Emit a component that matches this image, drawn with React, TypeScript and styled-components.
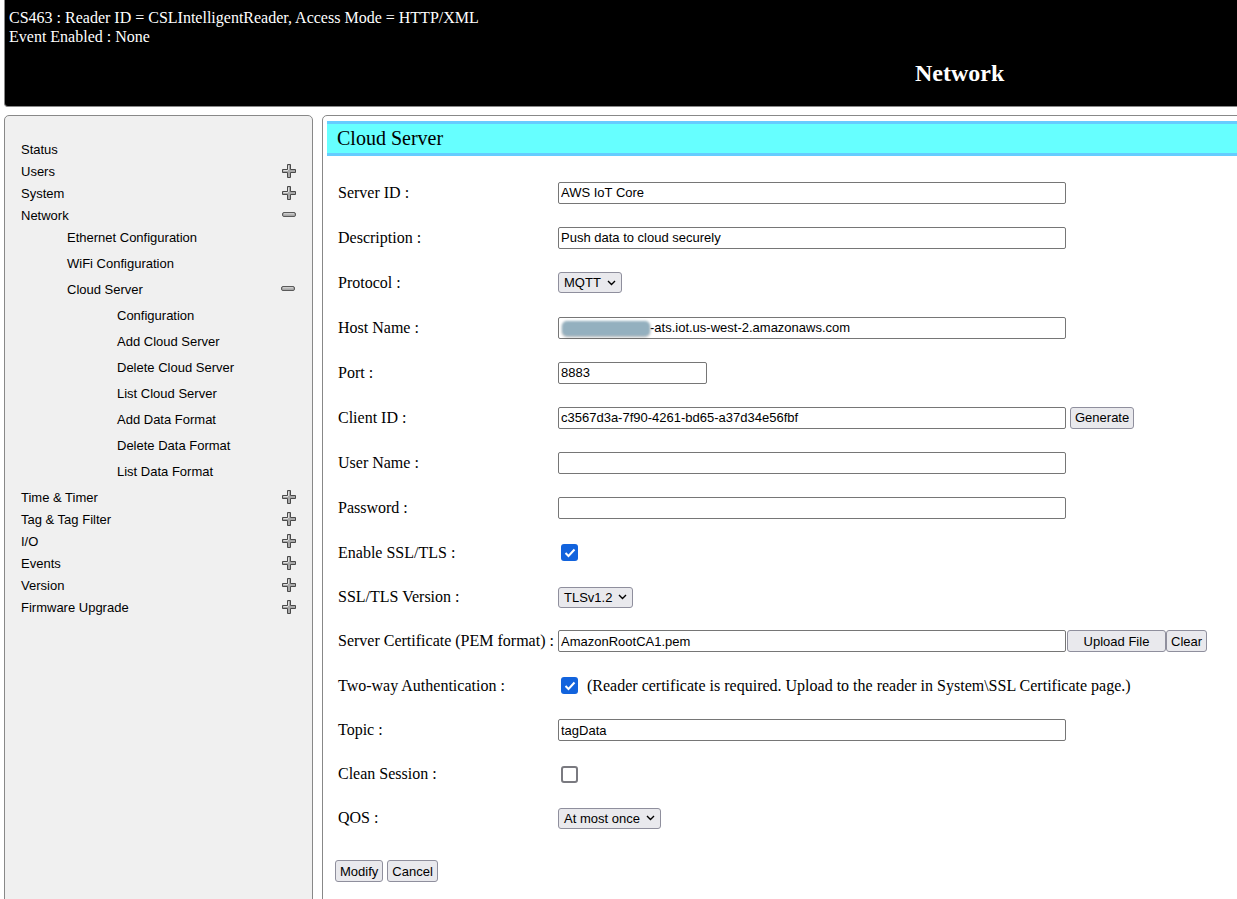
import React from "react";
import styled, { createGlobalStyle } from "styled-components";

const Global = createGlobalStyle`
  html, body { margin: 0; padding: 0; background: #fff; overflow: hidden; }
  body { font-family: "Liberation Serif", "Times New Roman", serif; }
`;

const Page = styled.div`
  width: 1262px;
  padding-left: 4px;
`;

const Header = styled.header`
  height: 107px;
  background: #000;
  border: 1px solid #888;
  border-top: none;
  border-radius: 0 0 4px 4px;
  color: #fff;
  display: flex;
  flex-direction: column;
  padding: 8px 0 0 4px;
  box-sizing: border-box;
  font-size: 16px;
  line-height: 19px;
`;

const InfoLine = styled.div`
  white-space: nowrap;
`;

const PageTitle = styled.div`
  margin-top: 13px;
  padding-left: 906px;
  font-size: 24px;
  font-weight: bold;
  line-height: 28px;
`;

const Body = styled.div`
  display: flex;
  gap: 9px;
  margin-top: 8px;
`;

const Sidebar = styled.nav`
  width: 309px;
  height: 820px;
  box-sizing: border-box;
  background: #f0f0f0;
  border: 1px solid #888;
  border-radius: 5px;
  padding: 22px 16px 0 16px;
  font-family: "Liberation Sans", Arial, sans-serif;
  font-size: 13px;
  color: #000;
`;

const NavRow = styled.div<{ $level: number }>`
  display: flex;
  align-items: center;
  justify-content: space-between;
  height: 22px;
  margin-bottom: ${(p) => (p.$level > 0 ? 4 : 0)}px;
  padding-left: ${(p) => (p.$level === 0 ? 0 : p.$level === 1 ? 46 : 96)}px;
  padding-right: ${(p) => (p.$level === 0 ? 0 : 1)}px;
  white-space: nowrap;
`;

const Main = styled.main`
  flex: 1;
  height: 820px;
  box-sizing: border-box;
  border: 1px solid #888;
  border-radius: 5px;
  padding: 5px 0 0 4px;
`;

const TitleBar = styled.div`
  height: 35px;
  box-sizing: border-box;
  background: #66ffff;
  border-top: 3px solid #66ccff;
  border-bottom: 3px solid #66ccff;
  padding-left: 10px;
  font-size: 20px;
  line-height: 29px;
`;

const Form = styled.div`
  padding: 14px 0 0 11px;
`;

const Row = styled.div<{ $h: number }>`
  display: grid;
  grid-template-columns: 220px auto;
  align-items: center;
  height: ${(p) => p.$h}px;
  font-size: 16px;
`;

const Label = styled.div`
  white-space: nowrap;
`;

const Control = styled.div`
  display: flex;
  align-items: center;
`;

const TextInput = styled.input<{ $w?: number }>`
  box-sizing: border-box;
  width: ${(p) => p.$w ?? 508}px;
  height: 22px;
  border: 1px solid #767676;
  border-radius: 2px;
  padding: 0 2px;
  font-family: "Liberation Sans", Arial, sans-serif;
  font-size: 13px;
  color: #000;
  background: #fff;
  outline: none;
  margin: 0;
`;

const FakeInput = styled.div`
  box-sizing: border-box;
  width: 508px;
  height: 22px;
  border: 1px solid #767676;
  border-radius: 2px;
  padding: 0 3px;
  font-family: "Liberation Sans", Arial, sans-serif;
  font-size: 13px;
  display: flex;
  align-items: center;
  background: #fff;
`;

const Blur = styled.span`
  display: inline-block;
  width: 88px;
  height: 15px;
  margin-top: 2px;
  border-radius: 5px;
  background: #94b0bf;
  filter: blur(0.8px);
  box-shadow: 0 1px 2px rgba(0, 0, 0, 0.35);
`;

const Button = styled.button<{ $w?: number; $ml?: number }>`
  box-sizing: border-box;
  height: 22px;
  ${(p) => (p.$w ? `width: ${p.$w}px;` : "")}
  margin: 0 0 0 ${(p) => p.$ml ?? 0}px;
  padding: 0 4px;
  border: 1px solid #8f8f9d;
  border-radius: 3px;
  background: #e9e9ed;
  font-family: "Liberation Sans", Arial, sans-serif;
  font-size: 13px;
  color: #000;
`;

const Select = styled.div`
  box-sizing: border-box;
  height: 21px;
  display: inline-flex;
  align-items: center;
  gap: 6px;
  padding: 0 5px 0 5px;
  border: 1px solid #8f8f9d;
  border-radius: 3px;
  background: #e9e9ed;
  font-family: "Liberation Sans", Arial, sans-serif;
  font-size: 13px;
`;

const Check = styled.span<{ $on: boolean }>`
  box-sizing: border-box;
  width: 17px;
  height: 17px;
  margin-left: 3px;
  border-radius: 3px;
  display: inline-flex;
  align-items: center;
  justify-content: center;
  background: ${(p) => (p.$on ? "#1263dd" : "#fff")};
  border: ${(p) => (p.$on ? "none" : "2px solid #7a7a80")};
`;

const Note = styled.span`
  margin-left: 9px;
  white-space: nowrap;
`;

const Actions = styled.div`
  display: flex;
  gap: 4px;
  margin: 20px 0 0 -3px;
`;

const Plus = () => (
  <svg width="14" height="14" viewBox="0 0 14 14">
    <path
      d="M5.5 0.5h3v5h5v3h-5v5h-3v-5h-5v-3h5z"
      fill="#a8a8a8"
      stroke="#4a4a4a"
      strokeWidth="1"
    />
    <path d="M6.5 1.5v4.5M1.5 6.5h4.5" stroke="#e0e0e0" strokeWidth="1" />
  </svg>
);

const Minus = () => (
  <svg width="14" height="6" viewBox="0 0 14 6">
    <rect x="0.5" y="0.5" width="13" height="4" rx="1.5" fill="#a8a8a8" stroke="#5a5a5a" />
    <path d="M2 1.8h10" stroke="#dcdcdc" strokeWidth="1" />
  </svg>
);

const Chevron = () => (
  <svg width="9" height="6" viewBox="0 0 9 6">
    <path d="M1 1l3.5 3.5L8 1" fill="none" stroke="#000" strokeWidth="1.4" />
  </svg>
);

const Tick = () => (
  <svg width="12" height="10" viewBox="0 0 12 10">
    <path d="M1.5 5l3 3 6-6.5" fill="none" stroke="#fff" strokeWidth="2" />
  </svg>
);

type Nav = { label: string; level: number; icon?: "plus" | "minus" };

const nav: Nav[] = [
  { label: "Status", level: 0 },
  { label: "Users", level: 0, icon: "plus" },
  { label: "System", level: 0, icon: "plus" },
  { label: "Network", level: 0, icon: "minus" },
  { label: "Ethernet Configuration", level: 1 },
  { label: "WiFi Configuration", level: 1 },
  { label: "Cloud Server", level: 1, icon: "minus" },
  { label: "Configuration", level: 2 },
  { label: "Add Cloud Server", level: 2 },
  { label: "Delete Cloud Server", level: 2 },
  { label: "List Cloud Server", level: 2 },
  { label: "Add Data Format", level: 2 },
  { label: "Delete Data Format", level: 2 },
  { label: "List Data Format", level: 2 },
  { label: "Time & Timer", level: 0, icon: "plus" },
  { label: "Tag & Tag Filter", level: 0, icon: "plus" },
  { label: "I/O", level: 0, icon: "plus" },
  { label: "Events", level: 0, icon: "plus" },
  { label: "Version", level: 0, icon: "plus" },
  { label: "Firmware Upgrade", level: 0, icon: "plus" },
];

export default function App() {
  return (
    <Page>
      <Global />
      <Header>
        <InfoLine>CS463 : Reader ID = CSLIntelligentReader, Access Mode = HTTP/XML</InfoLine>
        <InfoLine>Event Enabled : None</InfoLine>
        <PageTitle>Network</PageTitle>
      </Header>
      <Body>
        <Sidebar>
          {nav.map((n) => (
            <NavRow key={n.label} $level={n.level}>
              <span>{n.label}</span>
              {n.icon === "plus" && <Plus />}
              {n.icon === "minus" && <Minus />}
            </NavRow>
          ))}
        </Sidebar>
        <Main>
          <TitleBar>Cloud Server</TitleBar>
          <Form>
            <Row $h={45}>
              <Label>Server ID :</Label>
              <Control><TextInput readOnly value="AWS IoT Core" /></Control>
            </Row>
            <Row $h={45}>
              <Label>Description :</Label>
              <Control><TextInput readOnly value="Push data to cloud securely" /></Control>
            </Row>
            <Row $h={45}>
              <Label>Protocol :</Label>
              <Control><Select>MQTT <Chevron /></Select></Control>
            </Row>
            <Row $h={45}>
              <Label>Host Name :</Label>
              <Control>
                <FakeInput><Blur />-ats.iot.us-west-2.amazonaws.com</FakeInput>
              </Control>
            </Row>
            <Row $h={45}>
              <Label>Port :</Label>
              <Control><TextInput $w={149} readOnly value="8883" /></Control>
            </Row>
            <Row $h={45}>
              <Label>Client ID :</Label>
              <Control>
                <TextInput readOnly value="c3567d3a-7f90-4261-bd65-a37d34e56fbf" />
                <Button $ml={4}>Generate</Button>
              </Control>
            </Row>
            <Row $h={45}>
              <Label>User Name :</Label>
              <Control><TextInput readOnly value="" /></Control>
            </Row>
            <Row $h={45}>
              <Label>Password :</Label>
              <Control><TextInput type="password" readOnly value="" /></Control>
            </Row>
            <Row $h={45}>
              <Label>Enable SSL/TLS :</Label>
              <Control><Check $on><Tick /></Check></Control>
            </Row>
            <Row $h={44}>
              <Label>SSL/TLS Version :</Label>
              <Control><Select>TLSv1.2 <Chevron /></Select></Control>
            </Row>
            <Row $h={44}>
              <Label>Server Certificate (PEM format) :</Label>
              <Control>
                <TextInput readOnly value="AmazonRootCA1.pem" />
                <Button $w={99} $ml={1}>Upload File</Button>
                <Button>Clear</Button>
              </Control>
            </Row>
            <Row $h={45}>
              <Label>Two-way Authentication :</Label>
              <Control>
                <Check $on><Tick /></Check>
                <Note>(Reader certificate is required. Upload to the reader in System\SSL Certificate page.)</Note>
              </Control>
            </Row>
            <Row $h={44}>
              <Label>Topic :</Label>
              <Control><TextInput readOnly value="tagData" /></Control>
            </Row>
            <Row $h={44}>
              <Label>Clean Session :</Label>
              <Control><Check $on={false} /></Control>
            </Row>
            <Row $h={44}>
              <Label>QOS :</Label>
              <Control><Select>At most once <Chevron /></Select></Control>
            </Row>
            <Actions>
              <Button>Modify</Button>
              <Button>Cancel</Button>
            </Actions>
          </Form>
        </Main>
      </Body>
    </Page>
  );
}
